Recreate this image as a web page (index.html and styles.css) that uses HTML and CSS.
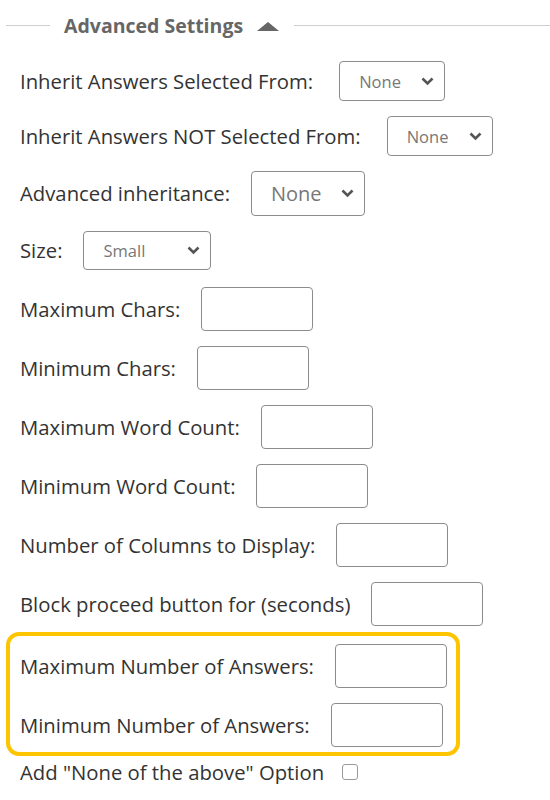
FILE: index.html
```html
<!DOCTYPE html>
<html>
<head>
<meta charset="utf-8">
<link rel="stylesheet" href="styles.css">
</head>
<body>
<div class="panel">
  <div class="header">
    <span class="line line-left"></span>
    <span class="title">Advanced Settings</span>
    <svg class="caret" width="22" height="9" viewBox="0 0 22 9"><polygon points="11,0 22,9 0,9" fill="#666"/></svg>
    <span class="line line-right"></span>
  </div>

  <div class="row r1">
    <span class="label">Inherit Answers Selected From:</span>
    <div class="select sel-sm"><span class="sel-text">None</span><svg class="chev" width="13" height="9" viewBox="0 0 13 9"><polyline points="1.5,1.5 6.5,6.5 11.5,1.5" fill="none" stroke="#555" stroke-width="2.6"/></svg></div>
  </div>
  <div class="row r2">
    <span class="label">Inherit Answers NOT Selected From:</span>
    <div class="select sel-sm"><span class="sel-text">None</span><svg class="chev" width="13" height="9" viewBox="0 0 13 9"><polyline points="1.5,1.5 6.5,6.5 11.5,1.5" fill="none" stroke="#555" stroke-width="2.6"/></svg></div>
  </div>
  <div class="row r3">
    <span class="label">Advanced inheritance:</span>
    <div class="select sel-lg"><span class="sel-text big">None</span><svg class="chev" width="13" height="9" viewBox="0 0 13 9"><polyline points="1.5,1.5 6.5,6.5 11.5,1.5" fill="none" stroke="#555" stroke-width="2.6"/></svg></div>
  </div>
  <div class="row r4">
    <span class="label">Size:</span>
    <div class="select sel-size"><span class="sel-text">Small</span><svg class="chev" width="13" height="9" viewBox="0 0 13 9"><polyline points="1.5,1.5 6.5,6.5 11.5,1.5" fill="none" stroke="#555" stroke-width="2.6"/></svg></div>
  </div>
  <div class="row">
    <span class="label">Maximum Chars:</span>
    <input class="field" type="text">
  </div>
  <div class="row">
    <span class="label">Minimum Chars:</span>
    <input class="field" type="text">
  </div>
  <div class="row">
    <span class="label">Maximum Word Count:</span>
    <input class="field" type="text">
  </div>
  <div class="row">
    <span class="label">Minimum Word Count:</span>
    <input class="field" type="text">
  </div>
  <div class="row">
    <span class="label">Number of Columns to Display:</span>
    <input class="field" type="text">
  </div>
  <div class="row">
    <span class="label">Block proceed button for (seconds)</span>
    <input class="field" type="text">
  </div>

  <div class="highlight">
    <div class="row first">
      <span class="label">Maximum Number of Answers:</span>
      <input class="field" type="text">
    </div>
    <div class="row">
      <span class="label">Minimum Number of Answers:</span>
      <input class="field" type="text">
    </div>
  </div>

  <div class="row check-row">
    <span class="label">Add "None of the above" Option</span>
    <span class="checkbox"></span>
  </div>
</div>
</body>
</html>
```

FILE: styles.css
```css
html, body {
  margin: 0;
  padding: 0;
  background: #fff;
}
body {
  font-family: "Open Sans", "Noto Sans", sans-serif;
  color: #333;
}
.panel {
  width: 550px;
}
.header {
  display: flex;
  align-items: center;
  height: 50px;
}
.line {
  height: 1px;
  background: #cfcfcf;
}
.line-left {
  width: 44px;
  margin-left: 6px;
}
.line-right {
  flex: 1;
  margin-left: 15px;
}
.title {
  font-weight: bold;
  font-size: 19.5px;
  color: #666;
  margin-left: 14px;
}
.caret {
  margin-left: 14px;
  margin-top: 2px;
}
.row {
  display: flex;
  align-items: center;
  height: 44px;
  margin-top: 15px;
  padding-left: 20px;
}
.r1 { margin-top: 9px; }
.r2 { margin-top: 11px; }
.r3 { margin-top: 13px; }
.r4 { margin-top: 13px; }
.r1 .select, .r2 .select { margin-left: 26px; }
.label {
  font-size: 20.3px;
  white-space: nowrap;
}
.select {
  display: flex;
  align-items: center;
  justify-content: space-between;
  box-sizing: border-box;
  border: 1.5px solid #8c8c8c;
  border-radius: 4px;
  margin-left: 21px;
  padding: 0 10px 0 19px;
}
.sel-sm { width: 106px; height: 40px; }
.sel-lg { width: 114px; height: 45px; }
.sel-size { width: 128px; height: 39px; }
.sel-text {
  font-size: 16.5px;
  color: #777;
}
.sel-text.big {
  font-size: 20px;
}
.chev { display: block; }
.field {
  box-sizing: border-box;
  width: 112px;
  height: 44px;
  margin: 0 0 0 21px;
  border: 1.5px solid #8c8c8c;
  border-radius: 4px;
  padding: 0;
  background: #fff;
  outline: none;
}
.highlight {
  box-sizing: border-box;
  width: 454px;
  margin: 6px 0 0 6px;
  border: 4px solid #fdc500;
  border-radius: 13px;
  padding: 8px 0 5px 0;
}
.highlight .row {
  padding-left: 10px;
}
.highlight .row.first {
  margin-top: 0;
}
.check-row {
  height: 24px;
  margin-top: 4px;
}
.checkbox {
  display: inline-block;
  box-sizing: border-box;
  width: 16px;
  height: 16px;
  border: 1.5px solid #999;
  border-radius: 3px;
  margin-left: 18px;
}
```
